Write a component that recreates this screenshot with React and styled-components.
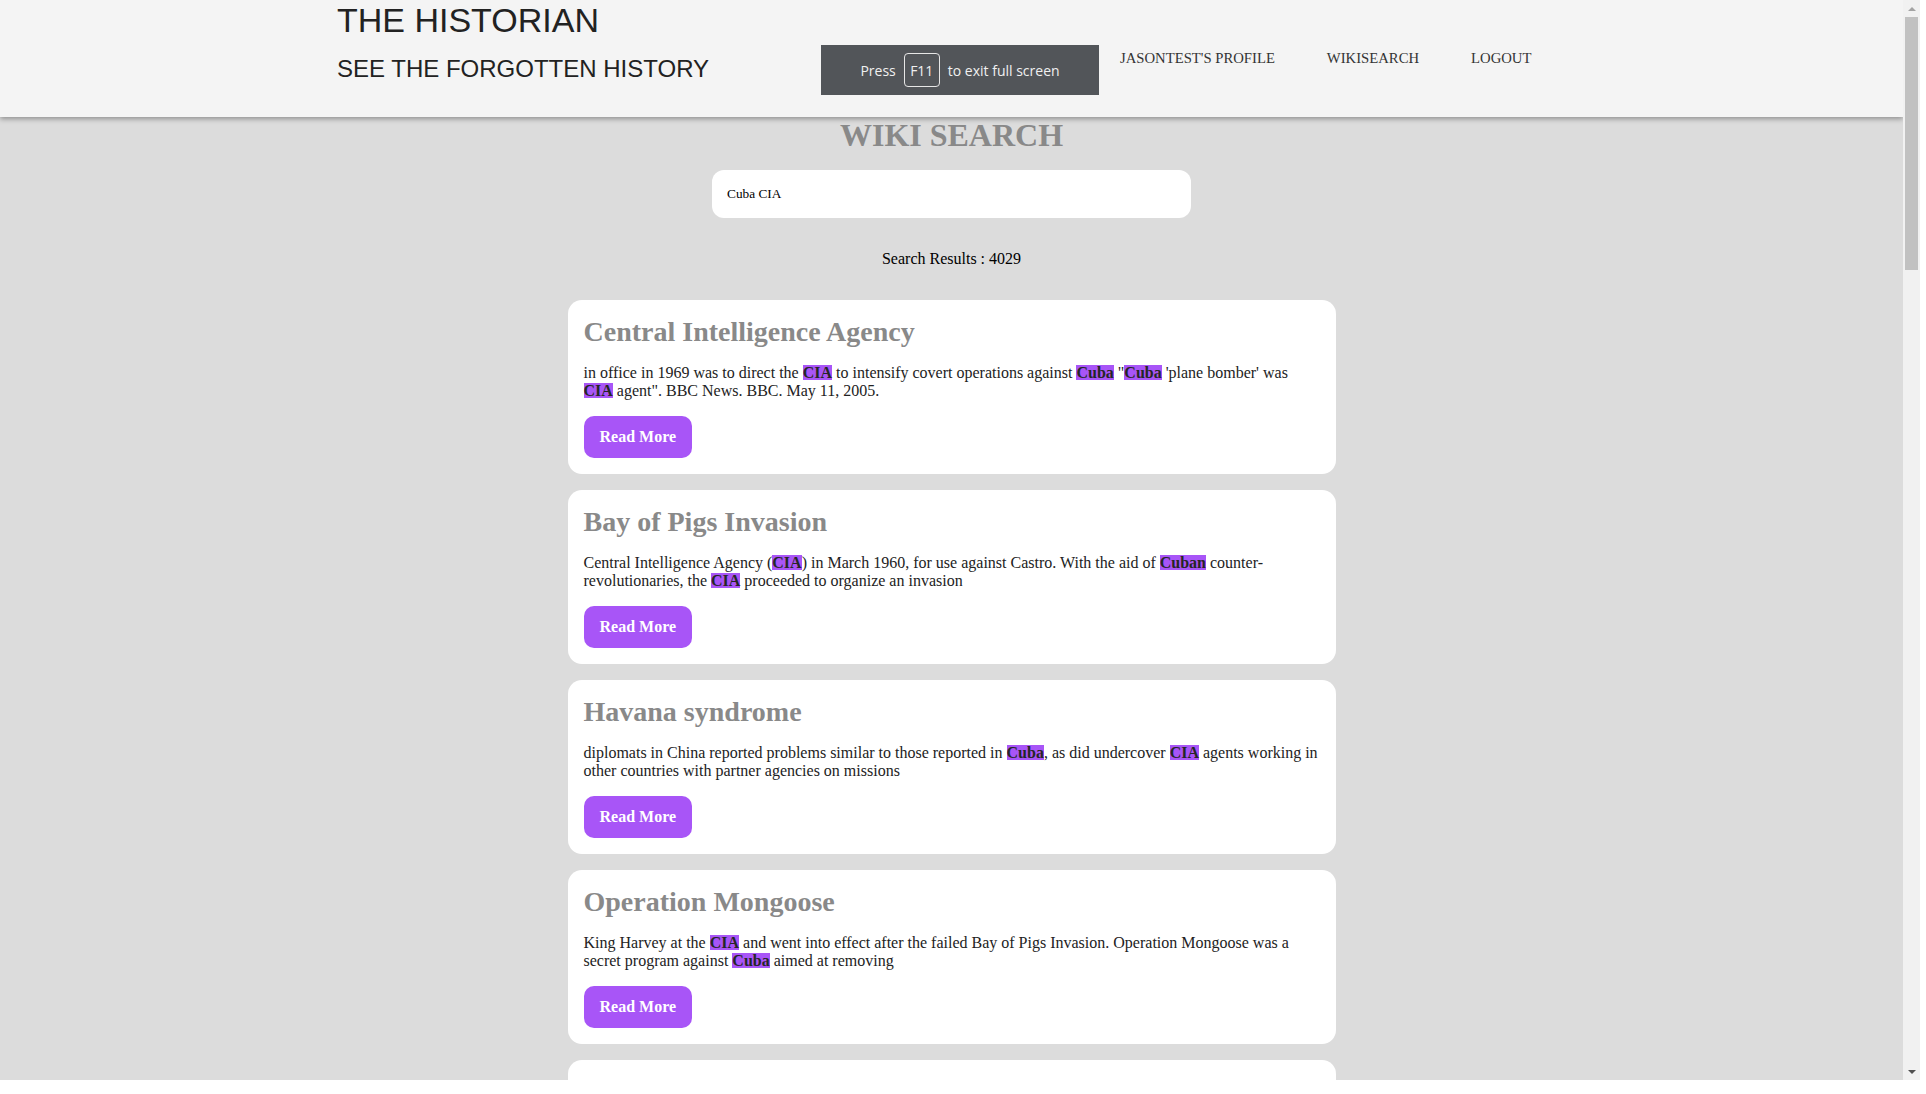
import React from 'react';
import styled, { createGlobalStyle } from 'styled-components';

const GlobalStyle = createGlobalStyle`
  html, body {
    margin: 0;
    padding: 0;
    background: #ffffff;
  }
`;

const results = [
  {
    title: 'Central Intelligence Agency',
    snippet: `in office in 1969 was to direct the [[CIA]] to intensify covert operations against [[Cuba]] "[[Cuba]] 'plane bomber' was [[CIA]] agent". BBC News. BBC. May 11, 2005.`,
  },
  {
    title: 'Bay of Pigs Invasion',
    snippet: 'Central Intelligence Agency ([[CIA]]) in March 1960, for use against Castro. With the aid of [[Cuban]] counter-revolutionaries, the [[CIA]] proceeded to organize an invasion',
  },
  {
    title: 'Havana syndrome',
    snippet: 'diplomats in China reported problems similar to those reported in [[Cuba]], as did undercover [[CIA]] agents working in other countries with partner agencies on missions',
  },
  {
    title: 'Operation Mongoose',
    snippet: 'King Harvey at the [[CIA]] and went into effect after the failed Bay of Pigs Invasion. Operation Mongoose was a secret program against [[Cuba]] aimed at removing',
  },
  {
    title: 'Cuban Missile Crisis',
    snippet: 'the [[CIA]] reported that Soviet missiles had been placed in [[Cuba]], and the Kennedy administration began a naval quarantine of the island',
  },
  {
    title: 'Luis Posada Carriles',
    snippet: 'was a [[Cuban]] exile militant and former [[CIA]] agent. He was accused of the bombing of Cubana Flight 455 in 1976',
  },
];

const renderSnippet = (text) =>
  text.split(/\[\[(.+?)\]\]/).map((part, i) =>
    i % 2 === 1 ? <Mark key={i}>{part}</Mark> : <React.Fragment key={i}>{part}</React.Fragment>
  );

export default function App() {
  return (
    <>
      <GlobalStyle />
      <Screen>
        <Page>
          <Header>
            <Brand>
              <SiteTitle>THE HISTORIAN</SiteTitle>
              <Tagline>SEE THE FORGOTTEN HISTORY</Tagline>
            </Brand>
            <Nav>
              <NavLink href="#">JASONTEST'S PROFILE</NavLink>
              <NavLink href="#">WIKISEARCH</NavLink>
              <NavLink href="#">LOGOUT</NavLink>
            </Nav>
          </Header>

          <Main>
            <PageTitle>WIKI SEARCH</PageTitle>
            <SearchInput defaultValue="Cuba CIA" />
            <ResultCount>Search Results : 4029</ResultCount>
            <ResultList>
              {results.map((r) => (
                <Card key={r.title}>
                  <CardTitle>{r.title}</CardTitle>
                  <Snippet>{renderSnippet(r.snippet)}</Snippet>
                  <ReadMore>Read More</ReadMore>
                </Card>
              ))}
            </ResultList>
          </Main>
        </Page>

        <Scrollbar>
          <ScrollArrow $dir="up" />
          <Thumb />
          <ScrollArrow $dir="down" />
        </Scrollbar>
      </Screen>

      <FullscreenToast>
        Press <Key>F11</Key> to exit full screen
      </FullscreenToast>
    </>
  );
}

const Screen = styled.div`
  display: flex;
  width: 1920px;
  height: 1080px;
  overflow: hidden;
`;

const Page = styled.div`
  flex: 1;
  min-width: 0;
  height: 100%;
  overflow: hidden;
  background: #dcdcdc;
`;

const Scrollbar = styled.div`
  display: flex;
  flex-direction: column;
  width: 17px;
  background: #f1f1f1;
`;

const ScrollArrow = styled.div`
  flex: 0 0 17px;
  display: flex;
  align-items: center;
  justify-content: center;
  margin-top: ${(p) => (p.$dir === 'down' ? 'auto' : '0')};

  &::before {
    content: '';
    border-left: 4px solid transparent;
    border-right: 4px solid transparent;
    ${(p) =>
      p.$dir === 'up'
        ? 'border-bottom: 4px solid #a3a3a3;'
        : 'border-top: 4px solid #505050;'}
  }
`;

const Thumb = styled.div`
  height: 253px;
  margin: 0 2px;
  background: #c1c1c1;
`;

const Header = styled.header`
  position: relative;
  z-index: 1;
  display: flex;
  align-items: flex-start;
  height: 117px;
  padding-left: 337px;
  box-sizing: border-box;
  background: #f4f4f4;
  box-shadow: 0 2px 5px rgba(0, 0, 0, 0.35);
`;

const Brand = styled.div`
  width: 757px;
  font-family: "Liberation Sans", Arial, sans-serif;
  color: #222;
`;

const SiteTitle = styled.h1`
  margin: 1px 0 0;
  font-size: 34px;
  font-weight: normal;
  line-height: 39px;
`;

const Tagline = styled.h2`
  margin: 15px 0 0;
  font-size: 24px;
  font-weight: normal;
  line-height: 28px;
`;

const Nav = styled.nav`
  display: flex;
  padding-top: 50px;
`;

const NavLink = styled.a`
  padding: 0 26px;
  font-family: "Liberation Serif", "Times New Roman", serif;
  font-size: 14.7px;
  line-height: 16px;
  color: #333;
  text-decoration: none;
`;

const Main = styled.main`
  display: flex;
  flex-direction: column;
  align-items: center;
  padding-bottom: 40px;
  font-family: "Liberation Serif", "Times New Roman", serif;
`;

const PageTitle = styled.h1`
  margin: 0;
  font-size: 32px;
  font-weight: bold;
  color: #898989;
`;

const SearchInput = styled.input`
  width: 479px;
  height: 48px;
  margin-top: 16px;
  padding: 0 15px;
  box-sizing: border-box;
  border: none;
  border-radius: 12px;
  background: #fff;
  outline: none;
  font-family: "Liberation Serif", "Times New Roman", serif;
  font-size: 13.33px;
  color: #000;
`;

const ResultCount = styled.p`
  margin: 32px 0 0;
  font-size: 16px;
  color: #000;
`;

const ResultList = styled.div`
  display: flex;
  flex-direction: column;
  gap: 16px;
  width: 768px;
  margin-top: 32px;
`;

const Card = styled.article`
  padding: 16px;
  border-radius: 14px;
  background: #fff;
`;

const CardTitle = styled.h2`
  margin: 0 0 16px;
  font-size: 28px;
  font-weight: bold;
  color: #898989;
`;

const Snippet = styled.p`
  margin: 0 0 16px;
  font-size: 16px;
  color: #222;
`;

const Mark = styled.span`
  display: inline-block;
  line-height: 15px;
  font-weight: bold;
  color: #262626;
  background: #a855f7;
`;

const ReadMore = styled.button`
  height: 42px;
  padding: 0 16px;
  border: none;
  border-radius: 10px;
  background: #a855f7;
  color: #fff;
  font-family: "Liberation Serif", "Times New Roman", serif;
  font-size: 16px;
  font-weight: bold;
  cursor: pointer;
`;

const FullscreenToast = styled.div`
  position: fixed;
  z-index: 10;
  top: 45px;
  left: 821px;
  display: flex;
  align-items: center;
  justify-content: center;
  gap: 8px;
  width: 278px;
  height: 50px;
  background: #525559;
  color: #f0f0f0;
  font-family: "Open Sans", "Noto Sans", sans-serif;
  font-size: 14px;
`;

const Key = styled.span`
  display: inline-flex;
  align-items: center;
  justify-content: center;
  width: 36px;
  height: 34px;
  box-sizing: border-box;
  border: 1px solid #e6e6e6;
  border-radius: 4px;
`;
